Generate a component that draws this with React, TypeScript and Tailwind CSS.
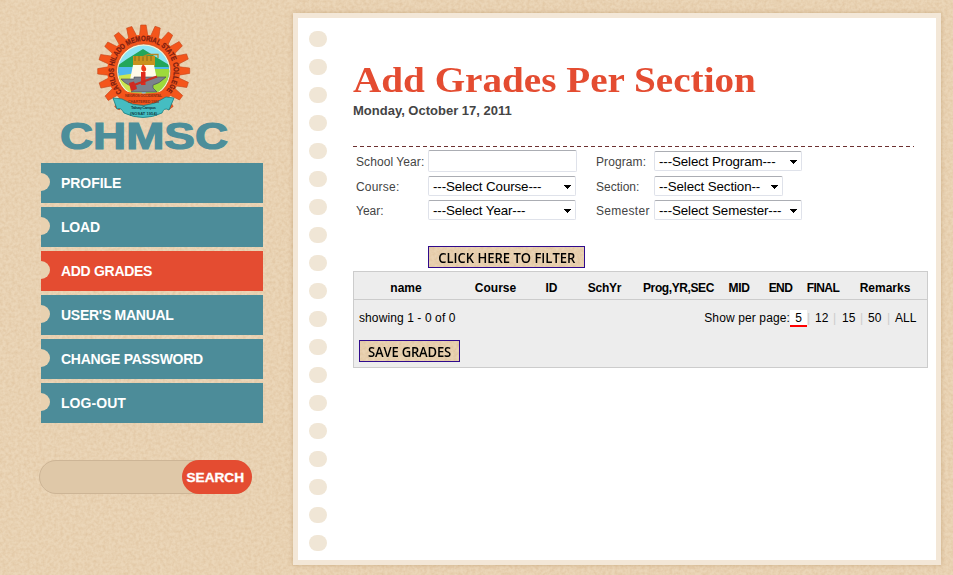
import React from "react";

const ARIAL = "font-['Liberation_Sans',Arial,sans-serif]";

function Texture({ id, className }: { id: string; className: string }) {
  return (
    <svg className={className} aria-hidden="true">
      <filter id={id} x="0" y="0" width="100%" height="100%" colorInterpolationFilters="sRGB">
        <feTurbulence type="fractalNoise" baseFrequency="0.33" numOctaves="2" seed="8" />
        <feColorMatrix values="0 0 0 0 0.72  0 0 0 0 0.52  0 0 0 0 0.3  0.32 0 0 0 -0.1" />
      </filter>
      <rect width="100%" height="100%" filter={`url(#${id})`} />
    </svg>
  );
}

const teeth = Array.from({ length: 20 }, (_, i) => i * 18).filter((a) => a < 160 || a > 200);

function Crest() {
  return (
    <svg className="block h-[145px] w-[190px]" viewBox="50 15 190 145">
      <defs>
        <path id="ringTop" d="M122 91.800 A30 30 0 1 1 165.400 91.800" />
        <clipPath id="scene"><circle cx="143.7" cy="71" r="25.5" /></clipPath>
      </defs>
      <g transform="translate(143.7 71)">
        {teeth.map((a) => (
          <path key={a} d="M-4.4 -34 L-3 -46 L2.4 -46 L4.4 -34Z" transform={`rotate(${a})`} fill="#f4551b" stroke="#c4481c" strokeWidth="0.6" />
        ))}
        <circle r="36.5" fill="#f4551b" />
      </g>
      <circle cx="143.7" cy="71" r="27" fill="#fff3d0" stroke="#b4441c" strokeWidth="0.6" />
      <g clipPath="url(#scene)">
        <rect x="117" y="44" width="54" height="54" fill="#8ee4f4" />
        <path d="M117 66 L127 59 L143 49 L156 57 L171 66 V73 H117Z" fill="#22a65a" />
        <rect x="117" y="67" width="54" height="13" fill="#4fb9ee" />
        <path d="M149 69 H171 V98 H145Z" fill="#9ed93b" />
        <path d="M117 76 L137 73 L143 98 H117Z" fill="#cde650" />
        <path d="M133 56 H155 V66 H133Z" fill="#c9921d" />
        <path d="M135 56v5m4-5v5m4-5v5m4-5v5m4-5v5" stroke="#8a6a1c" strokeWidth="1" />
        <path d="M142 57 L148 54.500 H158 V58" fill="none" stroke="#b48826" strokeWidth="1.3" />
        <path d="M133 65 H154 L157 80 H130Z" fill="#fffbe8" />
        <path d="M121 79 H134 V77 H166 Q159 84 153 85 V88 L157 92 H131 L136 88 V86 Q128 87 121 79Z" fill="#7b828c" stroke="#454752" strokeWidth="0.6" />
        <path d="M141 72 H145.500 V85 H141Z" fill="#e02a1b" />
        <path d="M143 64 Q149 70 144 72 Q139 70 143 64Z" fill="#ef3b1b" />
        <path d="M134 85 L157 76.500" stroke="#c92d20" strokeWidth="2.3" />
        <path d="M129 83 L134 81.500 L137 89 L131 91Z" fill="#d12920" />
      </g>
      <path d="M119.500 90 Q143.700 97 168 90 L164 102 Q143.700 112 123.500 102Z" fill="#f4551b" />
      <text fontSize="7.600" fill="#7a1d10" stroke="#7a1d10" strokeWidth="0.25" className="font-['Liberation_Sans',sans-serif] font-bold">
        <textPath href="#ringTop" textLength="138" lengthAdjust="spacingAndGlyphs">CARLOS HILADO MEMORIAL STATE COLLEGE</textPath>
      </text>
      <path d="M113 98 L122 99 Q143 113 166 97 L174 98 L169 110 Q164 107 162 113 Q143 122 124 113 Q121 107 117 109Z" fill="#45bdc2" stroke="#147d82" strokeWidth="0.8" />
      <g fill="#8a2c14" className="font-['Liberation_Sans',sans-serif] font-bold" textAnchor="middle">
        <text x="143.500" y="97" fontSize="3.700" textLength="37">NEGROS OCCIDENTAL</text>
        <text x="143.500" y="102.500" fontSize="3.700" textLength="31">CHARTERED 1983</text>
        <g fill="#113e47">
          <text x="143.500" y="109" fontSize="4" textLength="25">Talisay Campus</text>
          <text x="143.500" y="114.500" fontSize="4" textLength="27">(NOSAT 1954)</text>
        </g>
      </g>
      <text x="60" y="149" fontSize="37" textLength="168" lengthAdjust="spacingAndGlyphs" fill="#4c8e9a" stroke="#4c8e9a" strokeWidth="1.2" className="font-['Liberation_Sans',sans-serif] font-bold">CHMSC</text>
    </svg>
  );
}

function MenuItem({ label, tracking, active = false }: { label: string; tracking: string; active?: boolean }) {
  return (
    <a className={`relative flex h-10 items-center overflow-hidden pl-5 text-[14px] font-bold text-white ${tracking} ${active ? "bg-[#e44c31]" : "bg-[#4c8c99]"}`}>
      <span className="absolute -left-[9px] top-[10px] size-[18px] rounded-full bg-[#e8d1b0]" />
      {label}
    </a>
  );
}

function Select({ label, className }: { label: string; className: string }) {
  return (
    <div className={`flex h-5 items-center justify-between rounded-[2px] border border-[#dfe2ea] border-t-[#abadb3] bg-white pl-1 pr-1 text-[13.330px] tracking-[-0.1px] text-black ${className}`}>
      <span className="whitespace-nowrap pt-px">{label}</span>
      <svg className="mt-px h-1 w-[7px]" viewBox="0 0 7 4" shapeRendering="crispEdges"><path d="M0 0h7v1H6v1H5v1H4v1H3V3H2V2H1V1H0z" /></svg>
    </div>
  );
}

function TanButton({ label, id, className }: { label: string; id: string; className: string }) {
  return (
    <button className={`relative flex h-[22px] items-center justify-center border border-[#2f0a8c] bg-[#ead3b3] font-['Open_Sans',sans-serif] text-[14px] font-semibold text-black ${className}`}>
      <Texture id={id} className="absolute inset-0 h-full w-full" />
      <span className="relative scale-x-[0.930] whitespace-nowrap">{label}</span>
    </button>
  );
}

const menu = [
  { label: "PROFILE", tracking: "tracking-[-0.05px]" },
  { label: "LOAD", tracking: "tracking-[-0.2px]" },
  { label: "ADD GRADES", tracking: "tracking-[-0.3px]" },
  { label: "USER'S MANUAL", tracking: "tracking-[-0.27px]" },
  { label: "CHANGE PASSWORD", tracking: "tracking-[-0.27px]" },
  { label: "LOG-OUT", tracking: "tracking-[0.05px]" },
];

const columns = [
  { label: "name", tracking: "" },
  { label: "Course", tracking: "" },
  { label: "ID", tracking: "" },
  { label: "SchYr", tracking: "tracking-[-0.2px]" },
  { label: "Prog,YR,SEC", tracking: "tracking-[-0.4px]" },
  { label: "MID", tracking: "-mr-px tracking-[-0.3px]" },
  { label: "END", tracking: "tracking-[-0.6px]" },
  { label: "FINAL", tracking: "tracking-[-0.6px]" },
  { label: "Remarks", tracking: "" },
];

export default function App() {
  return (
    <div className={`relative h-[575px] w-[953px] overflow-hidden bg-[#ebd6b8] ${ARIAL}`}>
      <Texture id="paper" className="absolute inset-0 h-full w-full" />
      <div className="relative flex h-full">
        <aside className="w-[293px] pt-[15px]">
          <div className="ml-[50px]"><Crest /></div>
          <nav className="ml-[41px] mt-[3px] flex w-[222px] flex-col gap-1">
            {menu.map((m) => <MenuItem key={m.label} {...m} active={m.label === "ADD GRADES"} />)}
          </nav>
          <div className="ml-[39px] mt-[37px] flex h-[34px] w-[213px] justify-end rounded-full border border-[#cdb596] bg-[#dfc8a8]">
            <button className="-my-px -mr-px h-[34px] w-[70px] rounded-full bg-[#e44c31]">
              <svg className="block h-[34px] w-[70px]"><text x="4.500" y="22" fontSize="12" textLength="57.500" lengthAdjust="spacingAndGlyphs" fill="#fff" stroke="#fff" strokeWidth="0.3" className="font-['Liberation_Sans',sans-serif] font-bold">SEARCH</text></svg>
            </button>
          </div>
        </aside>

        <main className="mt-[13px] flex h-[552px] w-[648px] border-[5px] border-[#f3e7d7] bg-white shadow-[0_0_4px_rgba(150,105,50,0.35)]">
          <div className="ml-[11px] mt-[13px] flex w-[18px] flex-col gap-3">
            {Array.from({ length: 19 }, (_, i) => (
              <span key={i} className="h-4 w-[18px] rounded-[8px] bg-[#f0e6d6]" />
            ))}
          </div>
          <section className="ml-[26px] w-[575px] pt-[41px]">
            <h1 className="h-[43px] origin-left scale-x-[1.088] whitespace-nowrap font-['Liberation_Serif',serif] text-[36px] font-bold leading-[43px] text-[#e44c31]">Add Grades Per Section</h1>
            <p className="h-[18px] text-[13px] font-bold leading-[18px] text-[#444]">Monday, October 17, 2011</p>
            <svg className="mt-[26px] block h-px w-[561px]" shapeRendering="crispEdges"><path d="M0 .5H561" stroke="#6c3030" strokeDasharray="4 3" /></svg>

            <div className="ml-[3px] mt-[3px] grid grid-cols-[72px_168px_58px_150px] grid-rows-[22px_20px_20px] items-center gap-y-1 text-[12px] text-[#444]">
              <span className="whitespace-nowrap pt-px tracking-[0.08px]">School Year:</span>
              <div className="h-[22px] w-[149px] rounded-[2px] border border-[#dfe2ea] border-t-[#abadb3] bg-white" />
              <span className="pt-px tracking-[0.1px]">Program:</span>
              <Select label="---Select Program---" className="w-[148px]" />
              <span className="pt-px tracking-[0.2px]">Course:</span>
              <Select label="---Select Course---" className="w-[148px]" />
              <span className="pt-px">Section:</span>
              <Select label="--Select Section--" className="w-[129px]" />
              <span className="pt-px">Year:</span>
              <Select label="---Select Year---" className="w-[148px]" />
              <span className="pt-px tracking-[0.3px]">Semester</span>
              <Select label="---Select Semester---" className="w-[148px]" />
            </div>

            <TanButton id="filterGrain" label="CLICK HERE TO FILTER" className="ml-[75px] mt-[26px] w-[157px]" />

            <div className="mt-[3px] h-[97px] w-[575px] border border-[#ccc] bg-[#ededed] text-[12px] text-black">
              <div className="grid h-7 grid-cols-[104px_75px_37px_69px_79px_41px_43px_42px_82px] items-center border-b border-[#ccc] pt-[5px] text-center font-bold">
                {columns.map((h) => (
                  <span key={h.label} className={`whitespace-nowrap ${h.tracking}`}>{h.label}</span>
                ))}
              </div>
              <div className="mt-[10px] flex h-[17px] items-start justify-between pl-[5px] pr-3 leading-[17px]">
                <span className="tracking-[0.1px]">showing 1 - 0 of 0</span>
                <div className="flex">
                  <span className="tracking-[0.12px]">Show per page:</span>
                  <span className="h-[17px] w-[17px] border-b-2 border-[#f00] bg-white text-center">5</span>
                  <span className="w-[3px] text-[#ccc]">|</span>
                  <span className="w-[23px] pl-[5px]">12</span>
                  <span className="w-1 text-[#ccc]">|</span>
                  <span className="w-[23px] pl-[5px]">15</span>
                  <span className="w-1 text-[#ccc]">|</span>
                  <span className="w-[23px] pl-[4px]">50</span>
                  <span className="w-1 text-[#ccc]">|</span>
                  <span className="w-[24px] pl-[4px]">ALL</span>
                </div>
              </div>
              <TanButton id="saveGrain" label="SAVE GRADES" className="ml-[5px] mt-[13px] w-[101px] tracking-[-0.2px]" />
            </div>
          </section>
        </main>
      </div>
    </div>
  );
}
